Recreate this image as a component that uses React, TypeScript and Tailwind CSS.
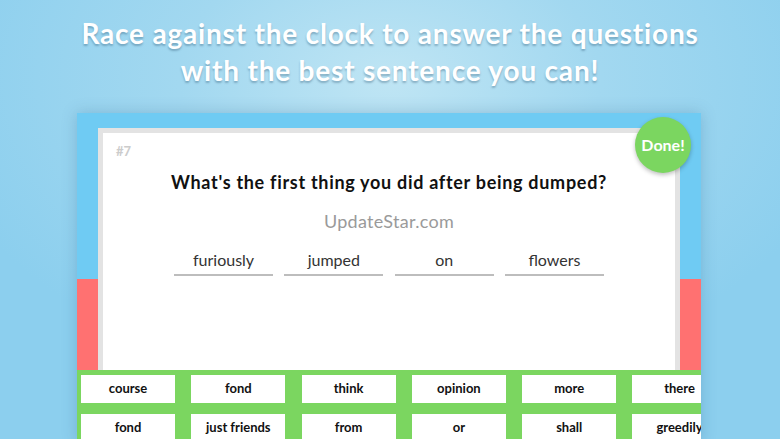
import React from "react";

const row1 = ["course", "fond", "think", "opinion", "more", "there"];
const row2 = ["fond", "just friends", "from", "or", "shall", "greedily"];
const answer = ["furiously", "jumped", "on", "flowers"];

export default function App() {
  return (
    <div
      className="relative w-[780px] h-[439px] overflow-hidden flex flex-col bg-[radial-gradient(ellipse_60%_70%_at_50%_18%,#bfe5f4_0%,#a2d8f0_45%,#8ccfee_100%)]"
      style={{ fontFamily: "Lato, 'Noto Sans', sans-serif" }}
    >
      <div className="shrink-0 h-[113px] pt-[15px] flex flex-col items-center">
        <div className="text-white font-bold text-[28px] leading-[37px] text-center tracking-[0.8px] [text-shadow:0_2px_2px_rgba(40,80,110,0.35)]">
          <div>Race against the clock to answer the questions</div>
          <div>with the best sentence you can!</div>
        </div>
      </div>

      <div className="relative ml-[77px] w-[624px] flex-1 flex flex-col shadow-[0_0_14px_rgba(40,90,130,0.25)] bg-[linear-gradient(to_bottom,#6fcbf3_0px,#6fcbf3_166px,#ff7171_166px)]">
        <div className="shrink-0 px-[21px] pt-[15px]">
          <div className="h-[242px] bg-white border-t-[5px] border-x-[5px] border-[#e3e3e3] flex flex-col">
            <div className="pl-[13px] pt-[10px] text-[13px] leading-[16px] font-bold text-[#cccccc]">#7</div>
            <div className="mt-[12px] text-center text-[18px] leading-[22px] font-bold text-[#111] tracking-[0.7px]">
              What's the first thing you did after being dumped?
            </div>
            <div className="mt-[17px] text-center text-[18px] leading-[22px] text-[#9a9a9a] tracking-[0.3px]">UpdateStar.com</div>
            <div className="mt-[17px] flex justify-center gap-x-[11.3px]">
              {answer.map((w) => (
                <div
                  key={w}
                  className="w-[99px] pb-[3px] border-b-2 border-[#bdbdbd] text-center text-[16px] leading-[22px] text-[#333]"
                >
                  {w}
                </div>
              ))}
            </div>
          </div>
        </div>
        <div className="flex-1 bg-[#7bd660] pl-[4px] pt-[5px] overflow-hidden">
          <div className="grid grid-cols-[repeat(6,94px)] gap-x-[16.3px] gap-y-[11px] w-max">
            {[...row1, ...row2].map((w, i) => (
              <div
                key={i}
                className="h-[28px] bg-white flex items-center justify-center text-[13px] font-bold text-[#111]"
              >
                {w}
              </div>
            ))}
          </div>
        </div>
        <div className="absolute left-[558px] top-[4px] w-[56px] h-[56px] rounded-full bg-[#7bd660] flex items-center justify-center text-white font-bold text-[16px] shadow-[0_2px_4px_rgba(0,0,0,0.25)]">
          Done!
        </div>
      </div>
    </div>
  );
}
